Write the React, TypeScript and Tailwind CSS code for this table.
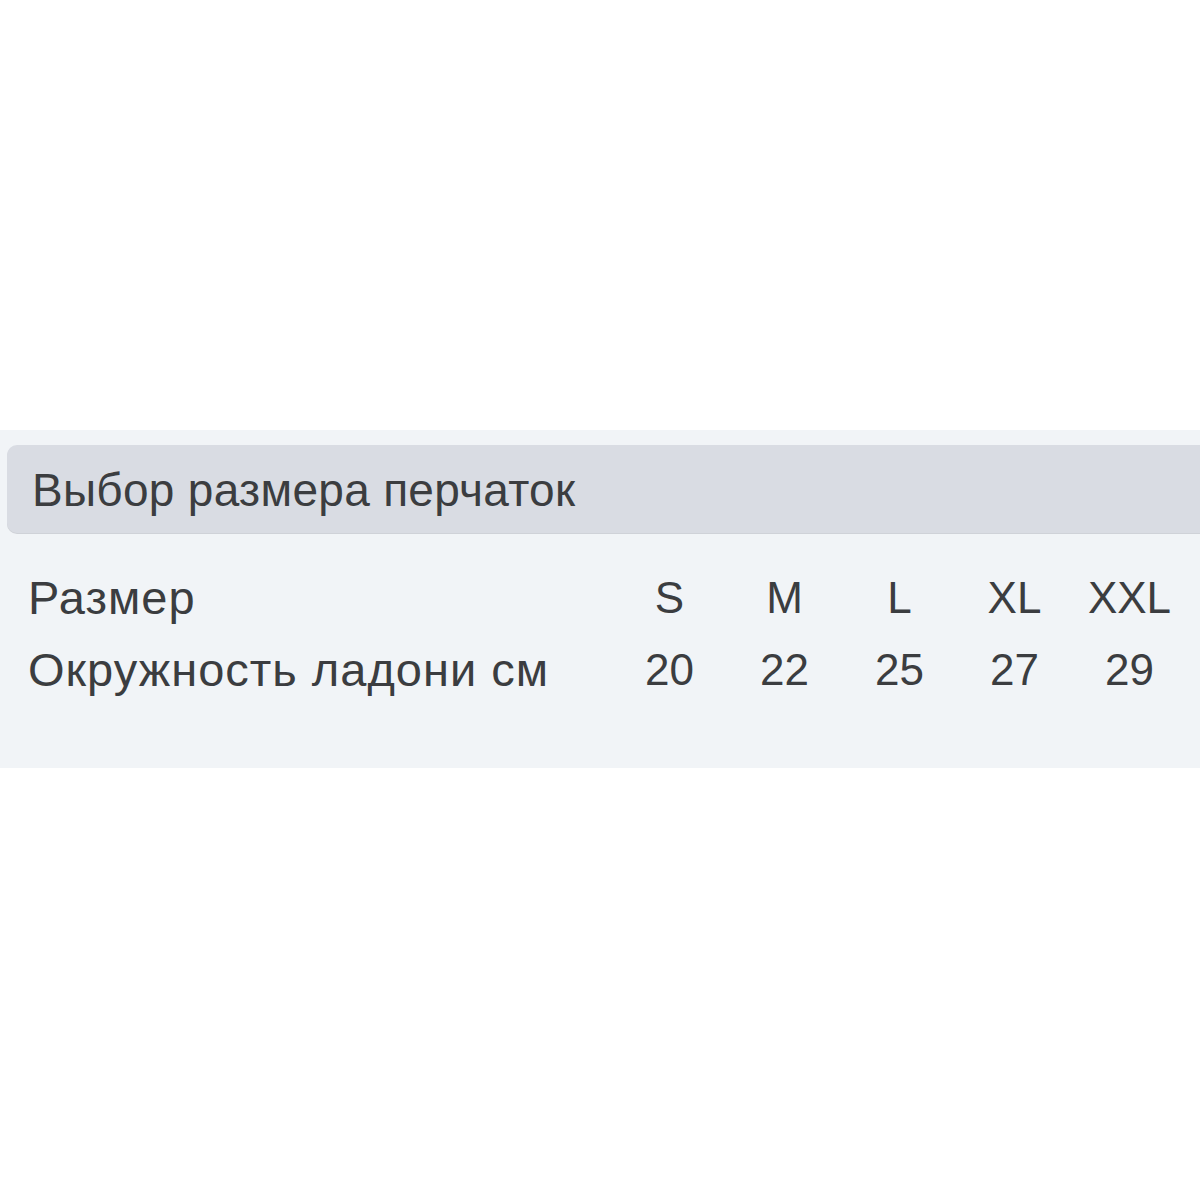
const sizes = ['S', 'M', 'L', 'XL', 'XXL'];
const girth = ['20', '22', '25', '27', '29'];

export default function App() {
    return (
        <div className="min-h-screen w-full bg-white pt-[430px] text-[#3b3d40]" style={{ fontFamily: '"Liberation Sans", Arial, sans-serif' }}>
            <section className="bg-[#f1f4f7] pt-[15px] pb-[62px] pl-[7px]">
                {/* Header */}
                <div className="h-[88px] bg-[#d9dce3] rounded-l-[10px] flex items-center pl-[25px] pt-[2px] shadow-[0_1px_0_#cfd2d8]">
                    <h2 className="text-[46px] leading-none font-normal tracking-[0.3px]">Выбор размера перчаток</h2>
                </div>

                {/* Size table */}
                <div className="mt-[29px] grid grid-cols-[605px_repeat(5,115px)] text-[44px] leading-[72px]">
                    <div className="pl-[21px] text-[47px] tracking-[1px]">Размер</div>
                    {sizes.map((s) => (
                        <div key={s} className="text-center">{s}</div>
                    ))}
                    <div className="pl-[21px] text-[47px] tracking-[1px]">Окружность ладони см</div>
                    {girth.map((g) => (
                        <div key={g} className="text-center">{g}</div>
                    ))}
                </div>
            </section>
        </div>
    );
}
